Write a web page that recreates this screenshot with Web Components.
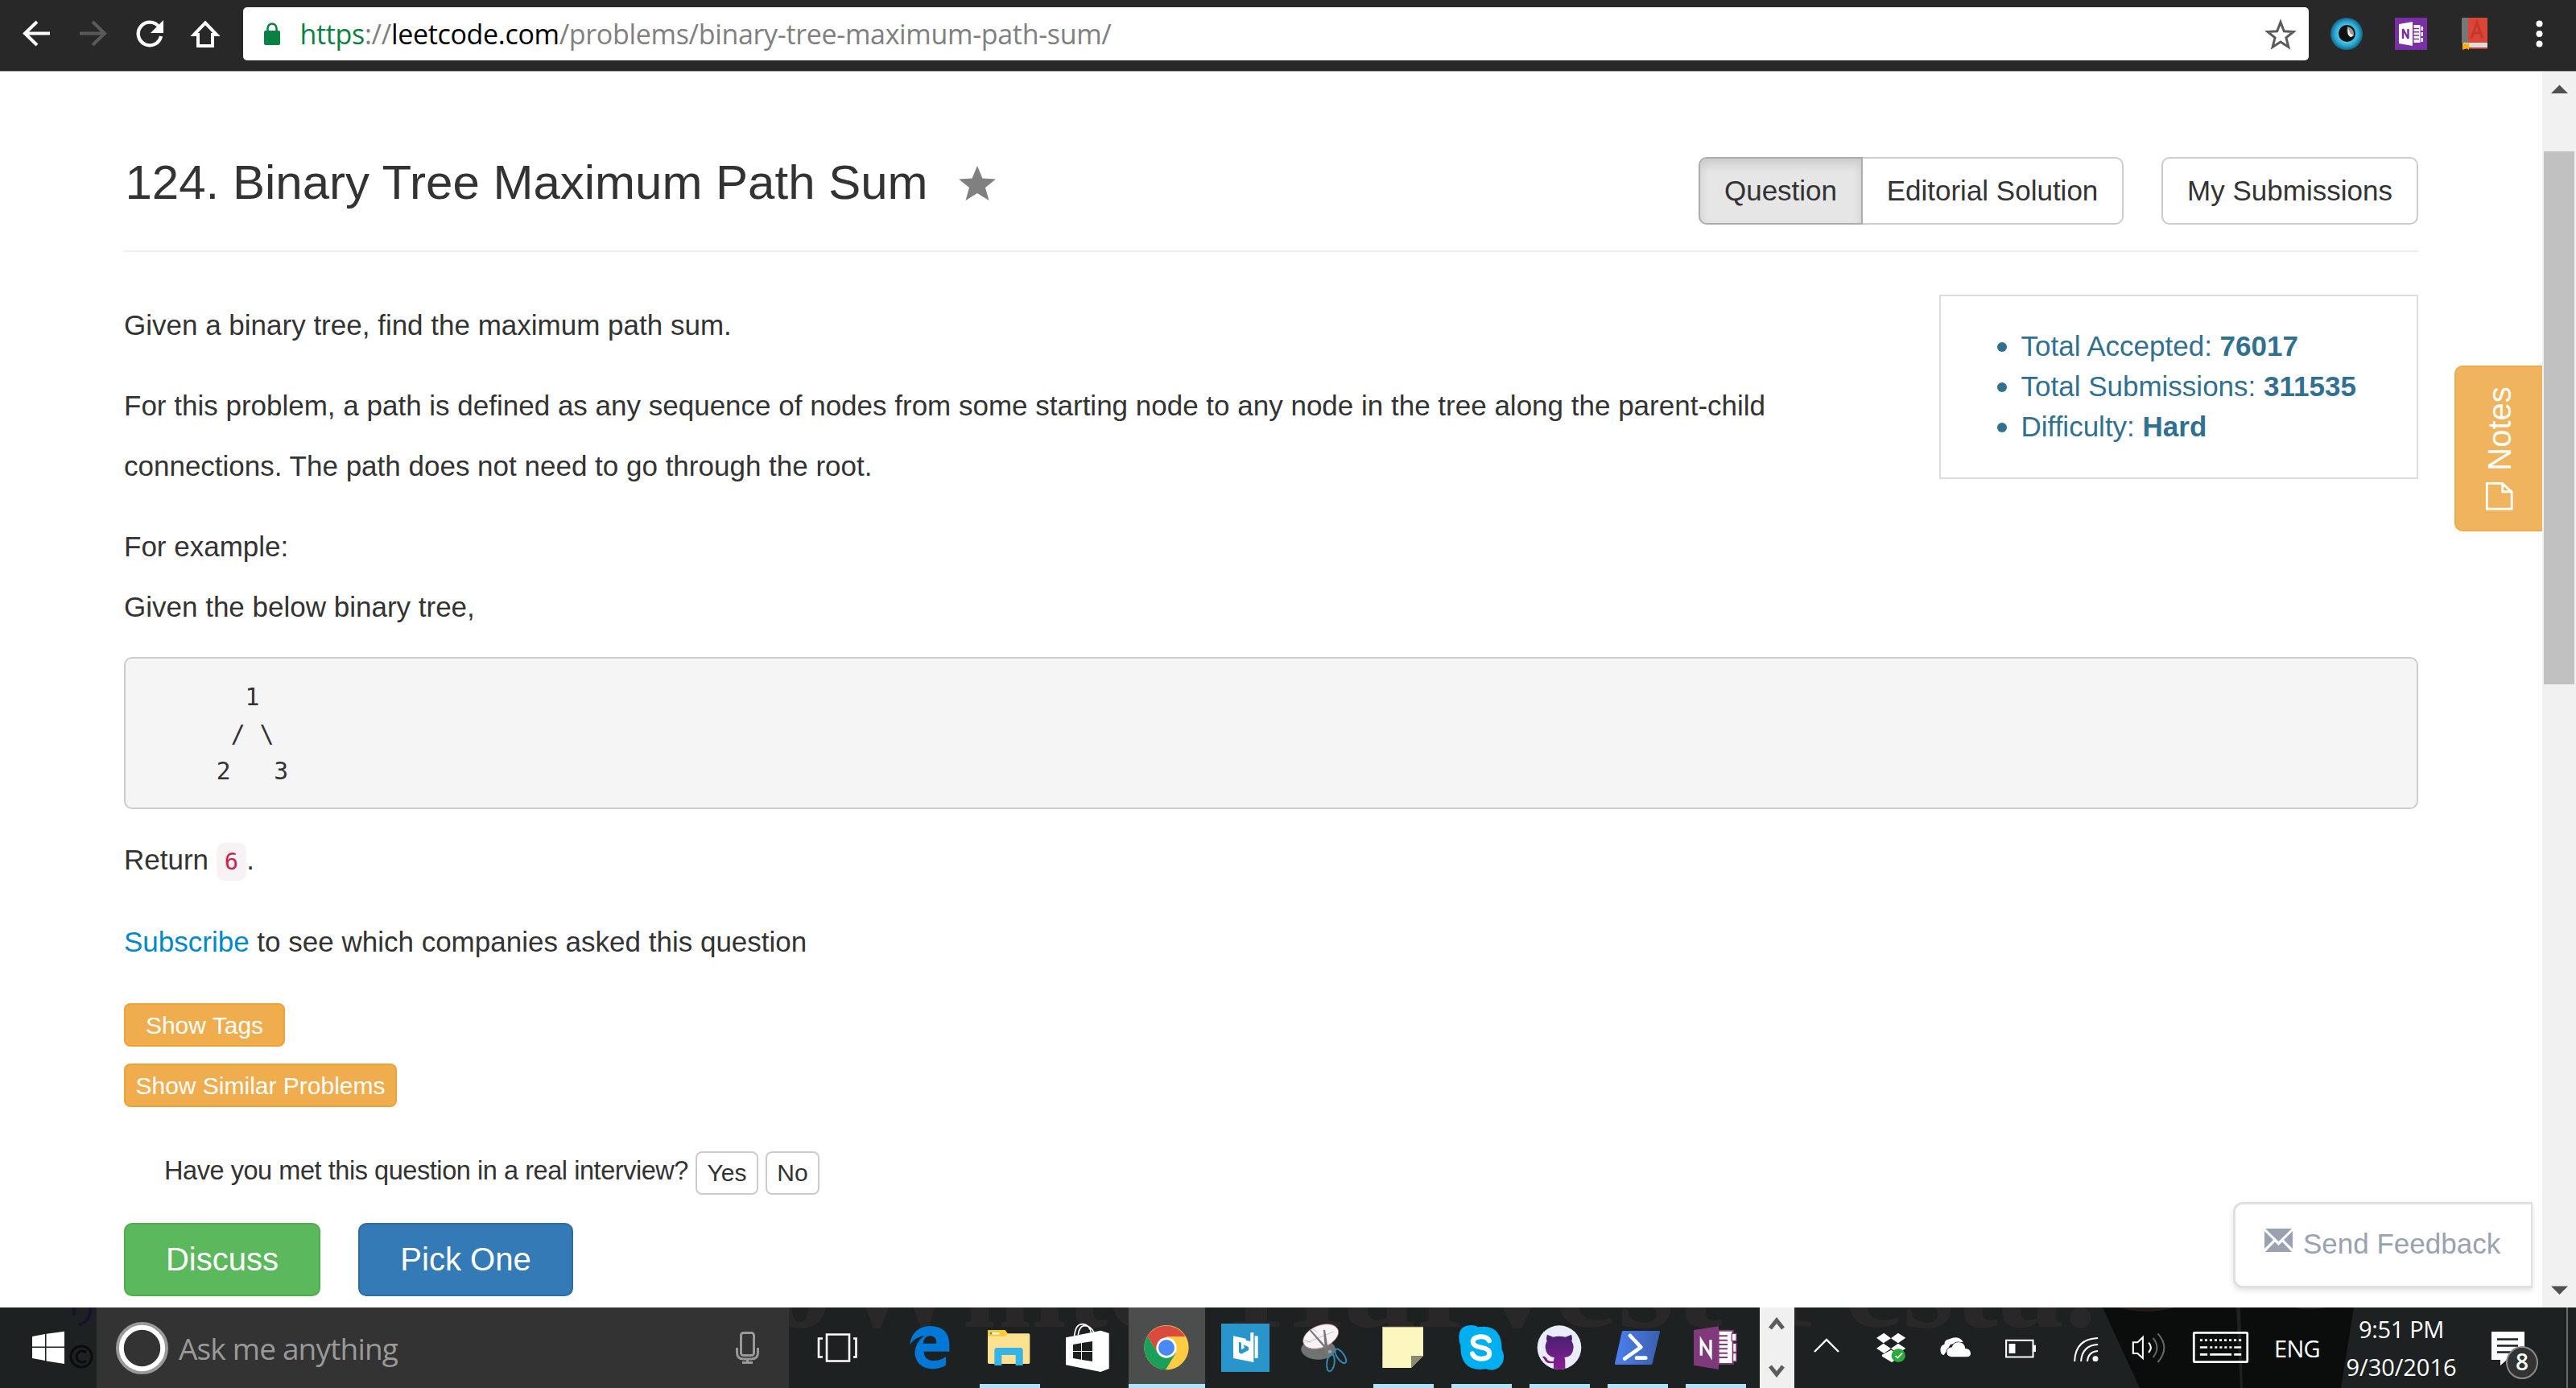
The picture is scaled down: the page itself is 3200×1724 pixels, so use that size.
<!DOCTYPE html>
<html lang="en">
<head>
<meta charset="utf-8">
<title>124. Binary Tree Maximum Path Sum</title>
<style>
html,body{margin:0;padding:0;background:#fff}
body{width:3200px;height:1724px;overflow:hidden;font-family:"Liberation Sans",Arial,sans-serif;color:#333}
</style>
</head>
<body>
<desktop-screen></desktop-screen>
<script>
const define=(name,html,init)=>{
  const t=document.createElement('template');t.innerHTML=html;
  customElements.define(name,class extends HTMLElement{
    constructor(){super();this.attachShadow({mode:'open'}).appendChild(t.content.cloneNode(true));}
    connectedCallback(){if(init)init(this);}
  });
};

/* Text whose tracking is adjusted to occupy a given width */
define('fit-text',`<style>:host{display:inline-block;white-space:nowrap;flex:none}span{display:inline-block}</style><span><slot></slot></span>`,el=>{
  const s=el.shadowRoot.querySelector('span'),w=+el.getAttribute('width');
  const n=el.textContent.length;
  s.style.letterSpacing='0px';
  const cur=s.getBoundingClientRect().width;
  s.style.letterSpacing=((w-cur)/n)+'px';
});

define('ui-button',`<style>
:host{display:inline-flex;flex:none;align-items:center;justify-content:center;box-sizing:border-box;height:54px;border:2px solid #ccc;border-radius:8px;background:#fff;color:#333;font-size:30px;white-space:nowrap}
:host([kind=nav]){height:84px;border-radius:10px;font-size:35px}
:host([kind=first]){height:84px;border-radius:10px 0 0 10px;font-size:35px;background:#e6e6e6;border-color:#adadad;box-shadow:inset 0 7px 12px rgba(0,0,0,.125)}
:host([kind=last]){height:84px;border-radius:0 10px 10px 0;font-size:35px;border-left:0}
:host([tone=warning]){background:#f0ad4e;border-color:#eea236;color:#fff;padding-top:1px}
:host([tone=success]),:host([tone=primary]){height:91px;font-size:40px;border-radius:10px;color:#fff}
:host([tone=success]){background:#5cb85c;border-color:#4cae4c}
:host([tone=primary]){background:#337ab7;border-color:#2e6da4}
</style><slot></slot>`);

define('browser-toolbar',`<style>
:host{display:flex;box-sizing:border-box;height:89px;background:#282828;border-bottom:1px solid #a9a9a9;padding-left:10px;font-family:"Open Sans","Noto Sans",sans-serif}
svg{display:block;flex:none}
.box{display:flex;flex:none;margin-top:9px;width:2566px;height:66px;background:#fff;border-radius:5px;margin-left:-2px}
.url{font-size:34px;line-height:66px;color:#808080;margin-left:21px;flex:1}
.s{color:#0b8043}.h{color:#000}
</style>
<svg width="70" height="88" viewBox="10 0 70 88"><path d="M62 41.5H32M46 27 31 41.5 46 56" fill="none" stroke="#fff" stroke-width="4"/></svg>
<svg width="70" height="88" viewBox="80 0 70 88"><path d="M99 41.5h30M115 27l15 14.500-15 14.500" fill="none" stroke="#5a5a5a" stroke-width="4"/></svg>
<svg width="70" height="88" viewBox="150 0 70 88"><path d="M197.500 33.500A14.300 14.300 0 1 0 200 45" fill="none" stroke="#fff" stroke-width="4.300"/><path d="M203 25v16h-16z" fill="#fff"/></svg>
<svg width="83.500" height="88" viewBox="220 0 83.500 88"><path d="M255 28.500 241 43h5v14h18V43h5z" fill="none" stroke="#fff" stroke-width="4" stroke-linejoin="miter"/></svg>
<div class="box">
<svg width="50" height="66" viewBox="302 9 50 66"><rect x="328" y="38" width="20" height="18" rx="2" fill="#0b8043"/><path d="M332.500 39v-4a5.500 5.500 0 0 1 11 0v4" fill="none" stroke="#0b8043" stroke-width="2.600"/></svg>
<div class="url"><fit-text width="1008"><span class="s">https</span>://<span class="h">leetcode.com</span>/problems/binary-tree-maximum-path-sum/</fit-text></div>
<svg width="80" height="66" viewBox="2788 9 80 66"><path d="M2833 27.500l4.300 11.200 11.700.7-9.100 7.500 3 11.500-9.900-6.400-9.900 6.400 3-11.500-9.100-7.500 11.700-.7z" fill="none" stroke="#5a5a5a" stroke-width="3"/></svg>
</div>
<svg width="88" height="88" viewBox="2868 0 88 88"><defs><radialGradient id="e"><stop offset=".4" stop-color="#5fd3ee"/><stop offset=".75" stop-color="#2aa6d0"/><stop offset="1" stop-color="#14658a"/></radialGradient></defs><circle cx="2915" cy="42" r="20" fill="url(#e)"/><circle cx="2915.500" cy="41.500" r="10.500" fill="#111"/><path d="M2916 33a9 9 0 0 1 8 9q-1 4-4 4-6-3-4-13z" fill="#9a9a9a"/><path d="M2917 35l3 7 4 2-4 2-3-3z" fill="#eee"/></svg>
<svg width="78" height="88" viewBox="2956 0 78 88"><rect x="2975" y="22" width="40" height="40" fill="#7b2fa6"/><path d="M2980 30l17-3v30l-17-3z" fill="#fff"/><path d="M2985 48V36l6.500 12V36" fill="none" stroke="#7b2fa6" stroke-width="2.400"/><path d="M2998.500 31h8v22h-8z" fill="#fff"/><path d="M2998 35.500h7m-7 4.300h7m-7 4.300h7m-7 4.300h7" stroke="#7b2fa6" stroke-width="1.500"/><path d="M3007.500 33h2.500v5h-2.500zM3007.500 40h2.500v5h-2.500zM3007.500 47h2.500v5h-2.500z" fill="#fff"/></svg>
<svg width="86" height="88" viewBox="3034 0 86 88"><path d="M3058 22h8v32h-8z" fill="#777"/><path d="M3066 22h24v31h-24z" fill="#dc4437"/><path d="M3060 53h30v6h-30z" fill="#ddd"/><path d="M3060 59h30v2h-30z" fill="#c0392b"/><path d="M3059 54h8v8l-3-2-5 2z" fill="#f4b400"/><path d="M3070 48l7-20 7 20m-11-7h9" fill="none" stroke="#c2382c" stroke-width="3"/></svg>
<svg width="80" height="88" viewBox="3120 0 80 88"><g fill="#fff"><circle cx="3154.500" cy="29.500" r="4"/><circle cx="3154.500" cy="42" r="4"/><circle cx="3154.500" cy="54.500" r="4"/></g></svg>`);

define('page-scrollbar',`<style>
:host{display:flex;flex:none;flex-direction:column;justify-content:space-between;align-items:center;width:42px;height:1535px;background:#f1f1f1}
.thumb{width:38px;height:662px;background:#c1c1c1;margin-bottom:auto}svg{display:block}
</style><svg width="42" height="99" viewBox="0 0 42 99"><path d="M11 27 21.500 16.500 32 27z" fill="#505050"/></svg><div class="thumb"></div>
<svg width="42" height="42" viewBox="0 0 42 42"><path d="M11 15.500h21L21.500 26z" fill="#505050"/></svg>`);

define('problem-stats',`<style>
:host{display:block;flex:none;box-sizing:border-box;width:595px;height:229px;border:2px solid #ddd;color:#31708f;font-size:35px;line-height:50px;padding:36.500px 0 0 99.500px}
div{display:flex;align-items:center;white-space:pre}
i{width:12px;height:12px;border-radius:50%;background:#31708f;margin:2px 17.500px 0 -29.500px}
</style><div><i></i>Total Accepted: <b>76017</b></div><div><i></i>Total Submissions: <b>311535</b></div><div><i></i>Difficulty: <b>Hard</b></div>`);

define('problem-page',`<style>
:host{display:block;position:relative;flex:1;height:1535px;box-sizing:border-box;padding:105px 154px 0;font-size:35px}
header{display:flex;height:117px;align-items:flex-start;border-bottom:2px solid #eee}
h1{margin:0 0 0 1.500px;font-weight:400;font-size:60px;line-height:66px;white-space:nowrap}
.star{margin:12px 0 0 38.500px}
.tabs{display:flex;margin:1px 0 0 auto}
.top{display:flex;justify-content:space-between;align-items:flex-start;margin-top:53px}
.copy{width:2100px}
p{margin:0 0 25px;line-height:75px}
pre{margin:0;box-sizing:border-box;height:189px;border:2px solid #ccc;border-radius:10px;background:#f5f5f5;padding:25px 0 0 23.500px;font:29.700px/46px "DejaVu Sans Mono",monospace}
.ret{margin-top:25px}
code{font:28.800px "DejaVu Sans Mono",monospace;color:#c7254e;background:#f9f2f4;border-radius:10px;padding:6px 10px 7px;margin-left:0}
a{color:#0088cc}
.col{display:flex;flex-direction:column;align-items:flex-start;gap:21px;margin-top:39px}
.ask{display:flex;margin:55px 0 35px;padding-left:50px;font-size:32.500px;line-height:48px}
.acts{display:flex;gap:47px}
.notes{position:absolute;right:0;top:365px;width:109px;height:206px;box-sizing:border-box;border:2px solid #eeab4c;border-right:0;border-radius:10px 0 0 10px;background:#f0b45e;color:#fff;display:flex;justify-content:center;align-items:center}
.notes div{display:flex;align-items:center;gap:14px;transform:rotate(-90deg);font-size:40px;line-height:44px;flex:none}
.fb{position:absolute;right:12px;top:1404px;width:372px;height:107px;box-sizing:border-box;border:3px solid #e0e0e0;border-right-width:2px;border-radius:12px 0 0 12px;background:#fff;box-shadow:0 3px 6px rgba(0,0,0,.12);color:#9aa2b1;display:flex;align-items:flex-start;padding:27px 0 0 36px;line-height:44px;white-space:nowrap}
svg{display:block;flex:none}
</style>
<header><h1>124. Binary Tree Maximum Path Sum</h1>
<svg class="star" width="46" height="44" viewBox="0 0 46 44"><path d="M23 0l6.500 15.500L46 16.500 33 27l4.500 16L23 34 8.500 43 13 27 0 16.500l16.500-1z" fill="#808080"/></svg>
<div class="tabs"><ui-button kind="first" style="width:204px">Question</ui-button><ui-button kind="last" style="width:324px">Editorial Solution</ui-button><ui-button kind="nav" style="width:319px;margin-left:47px">My Submissions</ui-button></div></header>
<div class="top"><div class="copy"><p>Given a binary tree, find the maximum path sum.</p><p>For this problem, a path is defined as any sequence of nodes from some starting node to any node in the tree along the parent-child connections. The path does not need to go through the root.</p><p>For example:<br>Given the below binary tree,</p></div><problem-stats></problem-stats></div>
<pre>       1
      / \\
     2   3</pre>
<p class="ret">Return <code>6</code>.</p>
<p style="margin:27px 0 0"><a>Subscribe</a> to see which companies asked this question</p>
<div class="col"><ui-button tone="warning" style="width:200px">Show Tags</ui-button><ui-button tone="warning" style="width:339px">Show Similar Problems</ui-button></div>
<div class="ask"><fit-text width="651">Have you met this question in a real interview?</fit-text><ui-button style="width:78px;margin-left:9px">Yes</ui-button><ui-button style="width:67px;margin-left:9px">No</ui-button></div>
<div class="acts"><ui-button tone="success" style="width:244px">Discuss</ui-button><ui-button tone="primary" style="width:267px">Pick One</ui-button></div>
<div class="notes"><div><svg width="35" height="34" viewBox="0 0 35 34"><path d="M1.500 1.500h32v19l-11 12h-21z M33 21H23v11" fill="none" stroke="#fff" stroke-width="3"/></svg><span>Notes</span></div></div>
<div class="fb"><svg style="margin-top:3px" width="35" height="30" viewBox="0 0 35 30" fill="#9aa2b1"><path d="M1 0h33L17.500 16z"/><path d="M0 3l11 11L0 25zM35 3L24 14l11 11z"/><path d="M1 29l12-12.500 4.500 4.500 4.500-4.500L34 29z"/></svg><span style="margin-left:13px">Send Feedback</span></div>`);

const icons={
edge:['-9 0 294 300','<path d="M60 139Q70 72 136 69Q205 70 208 136V164H112Q116 198 150 198Q176 198 195 183V215Q172 229 140 229Q84 222 79 170Q80 128 116 104Q80 110 60 139ZM110 134H160Q160 106 136 105Q114 106 110 134Z" fill="#0078d7" fill-rule="evenodd"/>'],
files:['285 0 294 300','<path d="M351 88q0-4 4-4h60l10 13h78q5 0 5 5v103q0 5-5 5H356q-5 0-5-5z" fill="#fde391"/><path d="M351 88q0-4 4-4h60l10 13-8 10h-66z" fill="#fcc935"/><path d="M360 93h34v7h-34z" fill="#fff"/><path d="M360 93h7v7h-7z" fill="#3c8dbc"/><path d="M376 216v-56q0-10 10-10h86q10 0 10 10v56h-27v-39h-52v39z" fill="#36b3e7"/>'],
store:['579 0 294 300','<path d="M642 112l130-26 31 10v132l-31 12-130-26z" fill="#fff"/><path d="M674 106q4-44 30-44 26 0 33 34M688 102q4-32 22-34 22-2 38 26" fill="none" stroke="#fff" stroke-width="5"/><path d="M669 138l30-5v29h-30zM702 132l39-6v36h-39zM669 165h30v29l-30-5zM702 165h39v36l-39-6z" fill="#1d2021"/>'],
chrome:['873 0 294 300','<circle cx="1017" cy="149" r="83" fill="#fecb42"/><path d="M946 107A83 83 0 0 1 1088 109H1017V149L982 166Z" fill="#db4a3f"/><path d="M946 107A83 83 0 0 0 1015 232L1052 170 1017 149 982 166Z" fill="#1ba05c"/><path d="M1017 109h71A83 83 0 0 1 1015 232L1052 170Z" fill="#fecb42"/><circle cx="1017" cy="150" r="38" fill="#fff"/><circle cx="1017" cy="150" r="30" fill="#4a88f6"/>'],
bing:['1167 0 294 300','<path d="M1221 60h180v180h-180z" fill="#2895cc"/><path d="M1266 106l47 10v6l17 4V94l12-1v111l-76-15z" fill="#fff"/><path d="M1346 106h12v83h-12z" fill="#fff"/><path d="M1287 128l9 3v26l12-7-5-11 20 8v12l-27 14-9-6z" fill="#2895cc"/>'],
snip:['0 0 294 300','<ellipse cx="122" cy="156" rx="64" ry="38" fill="#707372"/><ellipse cx="131" cy="108" rx="69" ry="41" transform="rotate(-22 131 108)" fill="#f6f4f6" stroke="#c9767c" stroke-width="2"/><path d="M80 130l100-40M100 80l20 12m-50 30l24 8" stroke="#aaa" stroke-width="2"/><path d="M90 82l82 96-22-28zM144 84l16 96-10-20z" fill="#555" stroke="#777" stroke-width="6"/><g fill="none" stroke="#3487b5" stroke-width="6"><ellipse cx="205" cy="181" rx="13" ry="31" transform="rotate(-35 205 181)"/><ellipse cx="168" cy="206" rx="14" ry="32" transform="rotate(8 168 206)"/></g><circle cx="165" cy="164" r="6" fill="#aaa"/>'],
sticky:['105 0 291 300','<path d="M172 73h152v107l-45 45H172z" fill="#fbf7be"/><path d="M279 180h45l-45 45z" fill="#8b8970"/><path d="M172 73h152" stroke="#c9b98a" stroke-width="3"/>'],
skype:['396 0 291 300','<path d="M457 112q0-46 46-46 16 0 24 7 90-14 90 84 14 24 2 50-20 36-62 22-96 14-94-88-6-12-6-29z" fill="#00aff0"/><path d="M570 124q-8-16-32-15-29 2-29 20 0 14 31 20 31 6 31 22 0 21-33 20-24-1-31-19" fill="none" stroke="#fff" stroke-width="18" stroke-linecap="round"/>'],
github:['687 0 291 300','<defs><linearGradient id="g" x1="0" y1="0" x2="0" y2="1"><stop stop-color="#45206f"/><stop offset="1" stop-color="#8c1f94"/></linearGradient><clipPath id="c"><circle cx="831" cy="149" r="82"/></clipPath></defs><circle cx="831" cy="149" r="82" fill="#e9ecf9"/><g clip-path="url(#c)"><path d="M786 101l22 9q23-5 46 0l22-9q5 14 1 24 8 12 7 24-2 34-34 38 3 5 3 14v32h-43v-26q-28 4-34-12-4-8-9-12 14-4 20 13 10 8 23 4 0-9 3-13-31-5-34-38-1-12 6-24-4-10 1-24z" fill="url(#g)"/></g>'],
shell:['978 0 291 300','<defs><linearGradient id="p"><stop stop-color="#4c80f0"/><stop offset="1" stop-color="#3a5fae"/></linearGradient></defs><path d="M1069 87h133q5 0 4 5l-28 116q-1 5-6 5h-130q-5 0-4-5l26-116q1-5 5-5z" fill="url(#p)"/><path d="M1095 105l40 43-60 43M1119 188h34" fill="none" stroke="#fff" stroke-width="14" stroke-linecap="round" stroke-linejoin="round"/>'],
onenote:['1269 0 291 300','<path d="M1424 86h54v124h-54z" fill="#fff" stroke="#80397b" stroke-width="6"/><path d="M1424 106h34m-34 16h34m-34 16h34m-34 16h34m-34 16h34m-34 16h34" stroke="#80397b" stroke-width="6"/><path d="M1474 97h17v28h-17zM1478 133h13v33h-13zM1478 170h13v31h-13z" fill="#fff" stroke="#80397b" stroke-width="4"/><path d="M1332 84l93-14v161l-93-16z" fill="#80397b"/><path d="M1360 179v-56l35 56v-58" fill="none" stroke="#fff" stroke-width="10"/>']
};

define('task-app',`<style>
:host{display:flex;flex:none;flex-direction:column;align-items:center;width:98px;height:100px}
:host([narrow]){width:97px}
.cell{display:flex;width:100%;height:100px;margin:0}
:host([active]) .cell{background:linear-gradient(90deg,transparent 1px,#4c4e4e 1px,#4c4e4e 96px,transparent 96px)}
.cell svg{display:block;width:100%;height:100px}
.bar{height:5px;width:75px;margin-top:-5px;display:none;background:#b0e3fa}
:host([running]) .bar{display:block}
:host([active]) .bar{display:block;width:95px;margin-right:1px}
</style><div class="cell"></div><div class="bar"></div>`,el=>{
  const i=icons[el.getAttribute('icon')];
  el.shadowRoot.querySelector('.cell').innerHTML=`<svg viewBox="${i[0]}" preserveAspectRatio="none">${i[1]}</svg>`;
});

define('task-bar',`<style>
:host{display:flex;position:relative;height:100px;background:#1d2121;color:#fff;font-family:"Open Sans","Noto Sans",sans-serif;overflow:hidden}
.wall{position:absolute;left:0;top:0}
svg{display:block;flex:none}
.row{display:flex;position:relative;width:3200px;height:100px}
.search{display:flex;flex:none;width:860px;background:#333;color:#999}
.search fit-text{font-size:37px;line-height:100px;padding-top:1px;margin-left:12px;width:272px}
.scroll{flex:none;width:43px;background:#f0f0f0;margin-left:6px}
.txt{font-size:29px;line-height:100px;padding-top:1px;margin-left:15px}
.clock{display:flex;flex-direction:column;align-items:center;width:170px;margin-left:16px;font-size:29px;line-height:46.500px;padding-top:4px}
.note{position:relative;display:flex;width:90px;margin-left:15px}
.badge{position:absolute;left:30px;top:48px;width:40px;height:41px;box-sizing:border-box;border:2px solid #8a8a8a;border-radius:50%;background:#333;font:600 28px/35px "Open Sans",sans-serif;text-align:center}
.peek{width:2px;height:100px;background:#6a6c6c;margin-left:0}
</style>
<svg class="wall" width="3200" height="100" viewBox="0 1624 3200 100"><g fill="#292727" font-family="Liberation Serif,serif" font-weight="700" font-size="160"><text x="955" y="1648" textLength="78" lengthAdjust="spacingAndGlyphs">o</text><text x="1040" y="1648" textLength="405" lengthAdjust="spacingAndGlyphs">White</text><text x="1528" y="1648" textLength="612" lengthAdjust="spacingAndGlyphs">Harvest</text><text x="2190" y="1648" textLength="415" lengthAdjust="spacingAndGlyphs">Festa.</text></g><path d="M2612 1624h166l5 100h-125z" fill="#0b0c0c"/><path d="M2783 1624h141l-16 100h-122z" fill="#0b0c0c"/><path d="M2632 1624q33 10 70 0zM2850 1624q18 5 40 0z" fill="#241b19"/><path d="M92 1624v10M112 1624q2 16-14 22" fill="none" stroke="#15142b" stroke-width="4"/><circle cx="101" cy="1685" r="13" fill="none" stroke="#0b0d0d" stroke-width="3"/><path d="M107 1680a7 7 0 1 0 0 10" fill="none" stroke="#0b0d0d" stroke-width="3"/></svg>
<div class="row">
<svg width="120" height="100" viewBox="0 1624 120 100"><path d="M40 1660l16-3v15.500H40zM57.500 1656.700l22.500-3v18.800H57.500zM40 1674h16v16l-16-3zM57.500 1674H80v20l-22.500-3.500z" fill="#fff"/></svg>
<div class="search"><svg width="90" height="100" viewBox="120 1624 90 100"><circle cx="176.500" cy="1674.500" r="30.500" fill="none" stroke="#999" stroke-width="4"/><circle cx="176.500" cy="1674.500" r="25.700" fill="none" stroke="#fff" stroke-width="6"/></svg>
<fit-text width="272">Ask me anything</fit-text>
<svg style="margin-left:auto" width="80" height="100" viewBox="900 1624 80 100"><g fill="none" stroke="#999" stroke-width="3"><rect x="920.500" y="1655.500" width="16" height="28" rx="3"/><path d="M915.500 1674v6q0 8 8 8h10q8 0 8-8v-6M928.500 1688v5M922 1692.500h13"/></g></svg></div>
<svg width="127" height="100" viewBox="980 1624 127 100"><path d="M1027 1657.500h28v33h-28zM1022 1662.500h-5v23h5M1060 1662.500h3.500v23h-3.500" fill="none" stroke="#fff" stroke-width="2.600"/></svg>
<task-app icon="edge"></task-app><task-app icon="files" running></task-app><task-app icon="store"></task-app><task-app icon="chrome" active></task-app><task-app icon="bing"></task-app><task-app icon="snip"></task-app><task-app icon="sticky" narrow running></task-app><task-app icon="skype" narrow running></task-app><task-app icon="github" narrow running></task-app><task-app icon="shell" narrow running></task-app><task-app icon="onenote" narrow running></task-app>
<svg class="scroll" height="100" viewBox="2186 1624 43 100"><path d="M2199 1650l8-10 8 10M2199 1697l8 10 8-10" fill="none" stroke="#5c5c5c" stroke-width="5"/></svg>
<svg width="81" height="100" viewBox="2229 1624 81 100"><path d="M2254 1679l15-15 15 15" fill="none" stroke="#fff" stroke-width="2.400"/></svg>
<svg width="80" height="100" viewBox="116 0 232 300" preserveAspectRatio="none"><path d="M177 113l27-18 25 20-27 18zM229 115l26-20 27 18-27 20zM177 152l25-18 27 19-25 18zM229 153l26-19 27 18-27 19zM197 176l33-18 26 18v14l-24 14-35-22z" fill="#fff"/><circle cx="256" cy="179" r="25" fill="#27ac38"/><path d="M245 180l8 8 17-18" fill="none" stroke="#fff" stroke-width="5"/></svg>
<svg width="80" height="100" viewBox="348.500 0 232.300 300" preserveAspectRatio="none"><g fill="#fff"><path d="M420 178q-14-4-12-24 2-14 14-16 0-18 18-20 32-16 50 10l-16 4-30 6-14 24z"/><path d="M447 184q-16-2-16-18t18-18q8-22 28-18 18 2 20 22 19 2 20 18 0 13-12 14z" stroke="#1d2121" stroke-width="4" paint-order="stroke"/></g></svg>
<svg width="80" height="100" viewBox="580.800 0 232.300 300" preserveAspectRatio="none"><path d="M645 122.500h97v62h-97z" fill="none" stroke="#fff" stroke-width="6"/><path d="M655 135h23v36h-23zM743 140h9v25h-9z" fill="#fff"/></svg>
<svg width="78" height="100" viewBox="813.100 0 226.500 300" preserveAspectRatio="none"><g fill="none" stroke="#fff" stroke-width="6"><path d="M892 201q2-84 84-87M915 201q4-60 61-63M938 201q2-36 38-39"/></g><circle cx="967" cy="191" r="10" fill="#fff"/></svg>
<svg width="78" height="100" viewBox="1039.600 0 226.500 300" preserveAspectRatio="none"><g fill="none" stroke-width="6"><path d="M1103 130h16l19-19v78l-19-18h-16z" stroke="#fff"/><path d="M1159 131q16 18 0 37" stroke="#fff"/><path d="M1175 114q28 34 0 72M1192 97q46 52 0 107" stroke="#666"/></g></svg>
<svg width="104" height="100" viewBox="1266 0 302 300" preserveAspectRatio="none"><rect x="1322" y="94" width="193" height="109" rx="3" fill="none" stroke="#fff" stroke-width="8"/><g fill="none" stroke="#fff" stroke-width="8"><path d="M1344 122h150" stroke-dasharray="9 8.500"/><path d="M1344 148.500h27M1467 148.500h26M1344 175h27M1380 175h78M1467 175h26"/><path d="M1380 148.500h80" stroke-dasharray="9 8.500"/></g></svg>
<fit-text class="txt" width="57">ENG</fit-text>
<div class="clock"><fit-text width="106">9:51 PM</fit-text><fit-text width="137">9/30/2016</fit-text></div>
<div class="note"><svg width="90" height="100" viewBox="3085 1624 90 100"><path d="M3097 1654h41v35h-22l-8 7v-7h-11z" fill="#fff"/><path d="M3104 1663.500h26M3104 1671.500h26M3104 1679.500h20" stroke="#1d2121" stroke-width="2.500"/></svg><div class="badge">8</div></div>
<div class="peek" style="margin-left:auto;margin-right:10px"></div>
</div>`);

define('desktop-screen',`<style>
:host{display:flex;flex-direction:column;width:3200px;height:1724px;overflow:hidden}
main{display:flex;flex:none;height:1535px;background:#fff}
</style><browser-toolbar></browser-toolbar><main><problem-page></problem-page><page-scrollbar></page-scrollbar></main><task-bar></task-bar>`);
</script>
</body>
</html>
